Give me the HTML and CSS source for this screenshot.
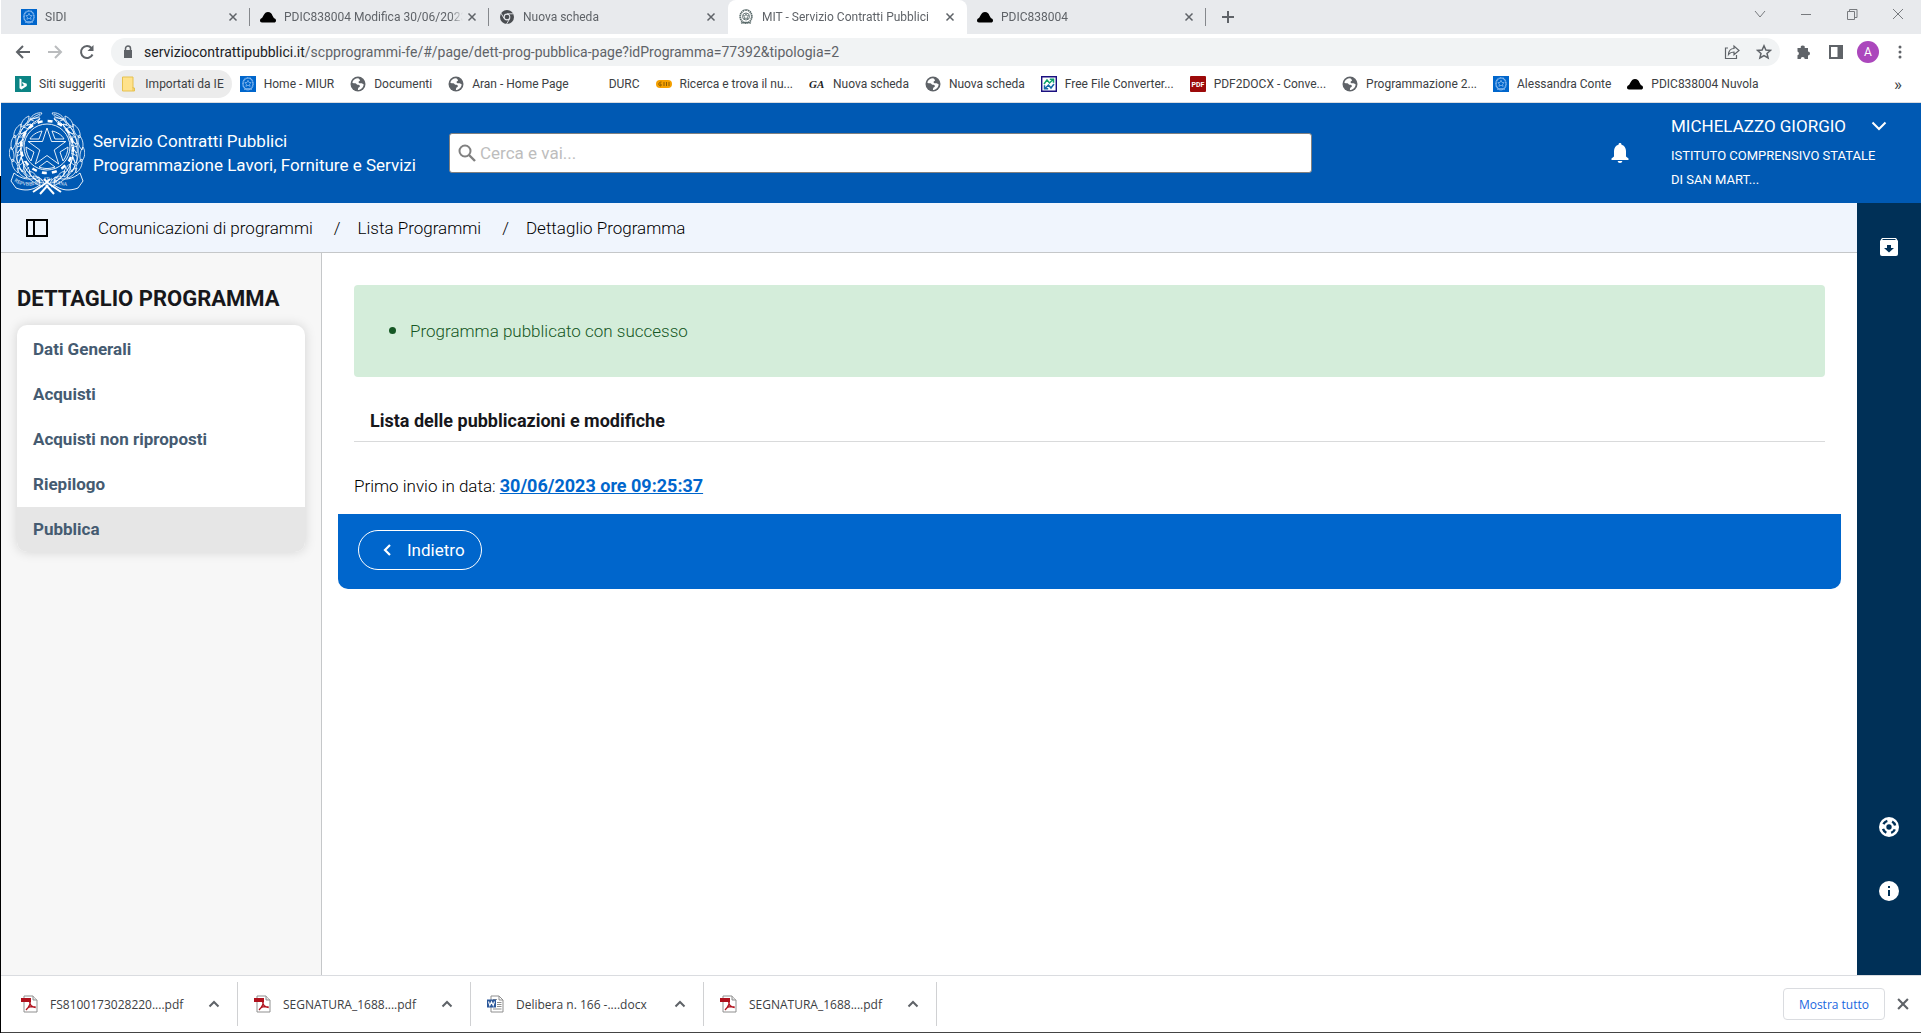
FILE: index.html
```
<!DOCTYPE html>
<html lang="it">
<head>
  <meta charset="utf-8">
  <title>MIT - Servizio Contratti Pubblici</title>
  <link rel="stylesheet" href="styles.css">
</head>
<body>
  <!-- shared icons -->
  <svg class="sprite" aria-hidden="true">
    <symbol id="i-miur" viewBox="0 0 16 16">
      <rect width="16" height="16" fill="#0066cc"/>
      <g fill="none" stroke="#86b9ef">
        <ellipse cx="8" cy="7.800" rx="5" ry="5.900" stroke-width="1.500" stroke-dasharray="1.200 .3"/>
        <path d="M8 4.300l1 2.200 2.200.1-1.700 1.500.6 2.300L8 9.200l-2.100 1.200.6-2.300-1.700-1.500L7 6.500z" stroke-width=".8"/>
        <path d="M4 13.300c2.500-.8 5.500-.8 8 0"/>
      </g>
    </symbol>
    <symbol id="i-rep" viewBox="0 0 16 16">
      <g fill="none" stroke="#5b6b6b">
        <ellipse cx="8" cy="7.500" rx="5.800" ry="6.500" stroke-width="1.800" stroke-dasharray="1.400 .5"/>
        <circle cx="8" cy="7.500" r="3.500" stroke-width=".9"/>
        <path d="M8 4.800l.8 1.900 2 .1-1.500 1.300.5 2L8 9l-1.800 1.100.5-2-1.500-1.300 2-.1z" stroke-width=".8"/>
        <path d="M3 14.200c3-1 7-1 10 0" stroke-width="1.400"/>
      </g>
    </symbol>
    <symbol id="i-cloud" viewBox="0 0 16 16">
      <path d="M2 13.500C.7 13.500 0 12.600 0 11.500c0-1 .6-1.800 1.600-2.200C3.500 8 3.800 3 8 3c2.300 0 3.700 1.500 4.400 3.500l1.600 2.700c1.300.3 2 1.100 2 2.200 0 1.300-.8 2.100-2 2.100z" fill="#000"/>
    </symbol>
    <symbol id="i-chrome" viewBox="0 0 16 16">
      <circle cx="8" cy="8" r="7" fill="#4a4d51"/>
      <circle cx="8" cy="8" r="3.400" fill="#e8eaed"/>
      <circle cx="8" cy="8" r="2.300" fill="#4a4d51"/>
      <path d="M8 4.800h6.500M5.200 9.600L2 4.200M10.800 9.600L7.600 15" stroke="#e8eaed" stroke-width=".9"/>
    </symbol>
    <symbol id="i-x" viewBox="0 0 10 10">
      <path d="M1.500 1.500l7 7M8.500 1.500l-7 7" stroke="currentColor" stroke-width="1.500"/>
    </symbol>
    <symbol id="i-globe" viewBox="0 0 16 16">
      <circle cx="8" cy="8" r="7.500" fill="#5f6368"/>
      <path d="M8.300 2.200C5.500 2 3 3.800 2.300 6.500c.8.8 2 .8 3 .8 1 .1 1.300 1.300 2.300 1.500 1 .3 2.400.2 2.300 1.400-.1 1-1.300.9-1.700 1.900-.2.700-.2 1.300-.3 1.900 3-.1 5.700-2.600 5.700-5.800-.8 0-1.200-.9-2-1-.9 0-1.900.4-2.600-.2-.8-.7-.3-1.800.5-2 .6-.2.6-.7.300-1.200-.4-.6-1.100-.900-1.500-1.600z" fill="#fff"/>
    </symbol>
    <symbol id="i-bing" viewBox="0 0 16 16">
      <rect width="16" height="16" fill="#0c8484"/>
      <path d="M4.500 2.500l2 .7v7.300l2.800-1.600-1.400-.7-.9-2.200 4.800 1.700v2.400l-5.300 3.300-2-1.200z" fill="#fff"/>
    </symbol>
    <symbol id="i-folder" viewBox="0 0 16 16">
      <path d="M1.500 1h10.500v11h1.500v3h-12z" fill="#ffe28c" stroke="#e6c14e"/>
      <path d="M12 11v4" stroke="#e6c14e"/>
    </symbol>
    <symbol id="i-pdf" viewBox="0 0 18 18">
      <path d="M4 1h9l4 4v12H4z" fill="#fff" stroke="#8f8f8f"/>
      <path d="M13 1v4h4" fill="#e4e4e4" stroke="#8f8f8f"/>
      <path d="M1 3h10v4H1z" fill="#b0111d"/>
      <path d="M9.500 7c1.500 0 .5 4-3.500 8M9.700 7c0 3 2 5 6 5.500M7.500 13c2-1.300 5-1.600 8-1" fill="none" stroke="#b0111d" stroke-width="1.300"/>
    </symbol>
    <symbol id="i-word" viewBox="0 0 18 18">
      <path d="M5 1h8l4 4v12H5z" fill="#fff" stroke="#8f8f8f"/>
      <path d="M13 1v4h4M11 7.500h4.500M11 9.500h4.500M11 11.500h4.500M7 14h8.500M7 4.500h4" fill="none" stroke="#8f8f8f"/>
      <path d="M1 4.500h9v8H1z" fill="#2b579a"/>
      <path d="M2.500 6.500l1.300 4 1.700-3.700 1.700 3.700 1.300-4" fill="none" stroke="#fff" stroke-width="1.100"/>
    </symbol>
    <symbol id="i-up" viewBox="0 0 12 12">
      <path d="M1.500 8.500L6 4l4.500 4.500" fill="none" stroke="#5f6368" stroke-width="2"/>
    </symbol>
    <!-- one branch of the wreath, mirrored for the other side -->
    <symbol id="i-branch" viewBox="0 0 76 84">
      <g fill="none" stroke="#fff" stroke-width=".8">
        <path d="M34 76C14 68 5 52 7 36 9 20 18 8 31 3"/>
        <path d="M31 72C16 62 10 48 12 34 14 22 21 12 31 8" stroke-width="1"/>
        <path d="M33 2c-5-1-10 2-12 6 5 0 10-2 12-6zM31 7c-6-1-11 2-13 7 6 0 11-2 13-7z"/>
        <path d="M20 5c-5 2-8 6-8 11 5-2 8-6 8-11zM22 13c-6 1-10 5-11 10 6-1 10-5 11-10z"/>
        <path d="M12 13c-5 3-8 8-7 14 5-3 7-8 7-14zM17 20c-6 3-9 8-9 13 6-2 9-7 9-13z"/>
        <path d="M6 24c-4 4-5 10-3 15 4-4 5-10 3-15zM14 28c-5 4-7 9-6 14 5-4 7-9 6-14z"/>
        <path d="M2 36c-3 5-2 11 2 15 2-5 1-11-2-15zM12 37c-4 5-5 10-3 15 4-4 5-10 3-15z"/>
        <path d="M3 48c-1 6 2 11 6 14 1-6-1-11-6-14zM12 46c-3 6-2 11 1 15 3-4 2-10-1-15z"/>
        <path d="M8 57c1 5 5 9 10 10-1-5-5-9-10-10zM15 53c-1 6 2 11 6 13 1-5-1-10-6-13z"/>
        <path d="M20 60c1 5 5 9 10 10-2-5-5-9-10-10zM24 65c2 4 6 7 11 7-2-4-6-7-11-7z"/>
        <path d="M20 8l5 2M14 16l6 2M9 26l7 0M8 36l6-2M8 45l6-3M11 54l5-4M16 61l4-5"/>
      </g>
    </symbol>
  </svg>

  <div class="window">
    <div class="tab-strip">
      <div class="tab">
        <svg class="icon"><use href="#i-miur"/></svg>
        <span class="tab-title">SIDI</span>
        <button class="tab-close" aria-label="Chiudi"><svg><use href="#i-x"/></svg></button>
      </div>
      <div class="tab">
        <svg class="icon"><use href="#i-cloud"/></svg>
        <span class="tab-title">PDIC838004 Modifica 30/06/2023</span>
        <button class="tab-close" aria-label="Chiudi"><svg><use href="#i-x"/></svg></button>
      </div>
      <div class="tab no-line">
        <svg class="icon"><use href="#i-chrome"/></svg>
        <span class="tab-title">Nuova scheda</span>
        <button class="tab-close" aria-label="Chiudi"><svg><use href="#i-x"/></svg></button>
      </div>
      <div class="tab no-line active">
        <svg class="icon"><use href="#i-rep"/></svg>
        <span class="tab-title">MIT - Servizio Contratti Pubblici</span>
        <button class="tab-close" aria-label="Chiudi"><svg><use href="#i-x"/></svg></button>
      </div>
      <div class="tab">
        <svg class="icon"><use href="#i-cloud"/></svg>
        <span class="tab-title">PDIC838004</span>
        <button class="tab-close" aria-label="Chiudi"><svg><use href="#i-x"/></svg></button>
      </div>
      <button class="new-tab" aria-label="Nuova scheda">
        <svg width="14" height="14" viewBox="0 0 14 14"><path d="M7 1v12M1 7h12" stroke="#5f6368" stroke-width="2"/></svg>
      </button>
      <div class="window-buttons">
        <button aria-label="Cerca schede"><svg viewBox="0 0 12 12"><path d="M1 3l5 6 5-6"/></svg></button>
        <button aria-label="Riduci"><svg viewBox="0 0 12 12"><path d="M1 6.500h10"/></svg></button>
        <button aria-label="Ripristina"><svg viewBox="0 0 12 12"><path d="M1.500 3.500h7v8h-7zM3.500 3.500v-2h7.500v8H8.500"/></svg></button>
        <button aria-label="Chiudi finestra"><svg viewBox="0 0 12 12"><path d="M1 1l10 10M11 1L1 11"/></svg></button>
      </div>
    </div>

    <div class="toolbar">
      <button class="tool" aria-label="Indietro"><svg viewBox="0 0 16 16"><path d="M15 8H2M8 2L2 8l6 6" fill="none" stroke="#5f6368" stroke-width="2"/></svg></button>
      <button class="tool" aria-label="Avanti"><svg viewBox="0 0 16 16"><path d="M1 8h13M8 2l6 6-6 6" fill="none" stroke="#babcbe" stroke-width="2"/></svg></button>
      <button class="tool" aria-label="Ricarica"><svg viewBox="0 0 16 16"><path d="M13.500 10.500A6 6 0 1 1 12.500 4" fill="none" stroke="#5f6368" stroke-width="2"/><path d="M14.500 1v6h-6z" fill="#5f6368"/></svg></button>
      <div class="omnibox">
        <svg class="lock" viewBox="0 0 10 14"><path d="M1 5h8v8H1z" fill="#5f6368"/><path d="M2.500 5V3.500a2.500 2.500 0 0 1 5 0V5" fill="none" stroke="#5f6368" stroke-width="1.500"/></svg>
        <div class="url"><b>serviziocontrattipubblici.it</b>/scpprogrammi-fe/#/page/dett-prog-pubblica-page?idProgramma=77392&amp;tipologia=2</div>
        <button class="tool" aria-label="Condividi"><svg viewBox="0 0 16 16"><path d="M4 4H1.500v10.500h11V11M4.500 10.500c.3-4 2.500-6 5.500-6V2l5 4.500-5 4.200V8c-2.500 0-4 .6-5.500 2.500z" fill="none" stroke="#5f6368" stroke-width="1.200"/></svg></button>
        <button class="tool" aria-label="Preferiti"><svg viewBox="0 0 16 16"><path d="M8 1.800l1.900 4.200 4.600.4-3.500 3 1.100 4.500L8 11.500l-4.100 2.400L5 9.400l-3.500-3 4.600-.4z" fill="none" stroke="#5f6368" stroke-width="1.500"/></svg></button>
      </div>
      <button class="tool" aria-label="Estensioni"><svg viewBox="0 0 16 16"><path d="M1.500 4h3.300a2 2 0 1 1 3.900 0H12v3.500a2 2 0 1 1 0 4V15H8.700a2 2 0 0 0-4 0H1.500v-3.700a2 2 0 0 0 0-3.800z" fill="#5f6368"/></svg></button>
      <button class="tool" aria-label="Pannello laterale"><svg viewBox="0 0 16 16"><path d="M2 2h12v12H2z" fill="none" stroke="#5f6368" stroke-width="2"/><path d="M9.500 2H14v12H9.500z" fill="#5f6368"/></svg></button>
      <button class="avatar">A</button>
      <button class="tool" aria-label="Menu"><svg viewBox="0 0 16 16"><g fill="#5f6368"><circle cx="8" cy="3" r="1.500"/><circle cx="8" cy="8" r="1.500"/><circle cx="8" cy="13" r="1.500"/></g></svg></button>
    </div>

    <nav class="bookmarks">
      <a href="#"><svg class="icon"><use href="#i-bing"/></svg>Siti suggeriti</a>
      <a href="#" class="hovered"><svg class="icon"><use href="#i-folder"/></svg>Importati da IE</a>
      <a href="#"><svg class="icon"><use href="#i-miur"/></svg>Home - MIUR</a>
      <a href="#"><svg class="icon"><use href="#i-globe"/></svg>Documenti</a>
      <a href="#"><svg class="icon"><use href="#i-globe"/></svg>Aran - Home Page</a>
      <a href="#"><svg class="icon"></svg>DURC</a>
      <a href="#"><svg class="icon" viewBox="0 0 16 16"><path d="M4 4h8a4 4 0 0 1 0 8H4a4 4 0 0 1 0-8z" fill="#f5a000"/><path d="M5.500 6C2 6 2 10 5 10V8H3.800M8 6v4M10.500 6v4M13 6v4" fill="none" stroke="#8a5a00"/></svg>Ricerca e trova il nu...</a>
      <a href="#"><svg class="icon" viewBox="0 0 16 16"><text class="ga" x="0" y="12">GA</text></svg>Nuova scheda</a>
      <a href="#"><svg class="icon"><use href="#i-globe"/></svg>Nuova scheda</a>
      <a href="#"><svg class="icon" viewBox="0 0 16 16"><path d="M.7.7h14.600v14.600H.7z" fill="#fff" stroke="#1a1080" stroke-width="1.400"/><path d="M3 8l3-4 2.500 3L12 3.500M8.800 3.200h3.700v3.600" fill="none" stroke="#10a36c" stroke-width="1.500"/><path d="M13 8l-3 4-2.500-3L4 12.500M7.200 12.800H3.500V9.200" fill="none" stroke="#1468a8" stroke-width="1.500"/></svg>Free File Converter...</a>
      <a href="#"><svg class="icon" viewBox="0 0 16 16"><rect width="16" height="16" rx="1" fill="#9c0a0a"/><text class="pdf-logo" x="8" y="11">PDF</text></svg>PDF2DOCX - Conve...</a>
      <a href="#"><svg class="icon"><use href="#i-globe"/></svg>Programmazione 2...</a>
      <a href="#"><svg class="icon"><use href="#i-miur"/></svg>Alessandra Conte</a>
      <a href="#"><svg class="icon"><use href="#i-cloud"/></svg>PDIC838004 Nuvola</a>
      <button class="more" aria-label="Altri preferiti">»</button>
    </nav>

    <header class="header">
      <svg class="emblem" viewBox="0 0 76 84">
        <use href="#i-branch"/>
        <use href="#i-branch" transform="translate(76 0) scale(-1 1)"/>
        <g fill="none" stroke="#fff" stroke-width=".9">
          <circle cx="38" cy="36" r="23"/>
          <circle cx="38" cy="36" r="26" stroke-width="2.500" stroke-dasharray="5 5.200"/>
          <path d="M38 17l4.500 13.500h14.300L45.200 39l4.500 14L38 44.500 26.300 53l4.500-14-11.600-8.500h14.300z"/>
          <path d="M33 20c-5 1-10 4-12 8h9zM43 20c5 1 10 4 12 8h-9zM17 36l8 5-3 9c-3-4-5-9-5-14zM59 36l-8 5 3 9c3-4 5-9 5-14zM30 56l8-6 8 6c-5 2-11 2-16 0z"/>
          <path d="M5 62L2 70l5 7c8 3 16 3 24-3l-1-8c-9 4-18 2-25-4zM71 62l3 8-5 7c-8 3-16 3-24-3l1-8c9 4 18 2 25-4z"/>
        </g>
        <path d="M24 81l13-9 4-4M52 81l-13-9-4-4M31 83l8-9M45 83l-8-9" fill="none" stroke="#fff" stroke-width="2"/>
        <path id="ribbon" d="M5 70c8 6 18 6 27 1 4-2 8-2 12 0 9 5 19 5 27-1" fill="none"/>
        <text class="motto"><textPath href="#ribbon">REPVBBLICA ITALIANA</textPath></text>
      </svg>
      <div class="brand">Servizio Contratti Pubblici<br>Programmazione Lavori, Forniture e Servizi</div>
      <label class="search">
        <svg width="18" height="18" viewBox="0 0 18 18"><circle cx="7" cy="7" r="5.500" fill="none" stroke="#808080" stroke-width="2"/><path d="M11 11l6 6" stroke="#808080" stroke-width="2.400"/></svg>
        <input type="text" placeholder="Cerca e vai..." aria-label="Cerca e vai">
      </label>
      <button class="bell" aria-label="Notifiche"><svg width="18" height="20" viewBox="0 0 18 20"><path d="M9 0c1 0 1.500.7 1.500 1.700C13.300 2.400 15 5 15 8v5.500l2.500 2V17H.5v-1.500l2.500-2V8c0-3 1.700-5.600 4.500-6.300C7.500.7 8 0 9 0zM6.700 18h4.600c0 1.200-1 2-2.300 2s-2.300-.8-2.300-2z" fill="#fff"/></svg></button>
      <div class="user">
        <button class="user-name">MICHELAZZO GIORGIO
          <svg width="16" height="10" viewBox="0 0 16 10"><path d="M1.500 1.500L8 8l6.500-6.500" fill="none" stroke="#fff" stroke-width="2"/></svg>
        </button>
        <div class="user-office">ISTITUTO COMPRENSIVO STATALE DI SAN MART...</div>
      </div>
    </header>

    <div class="page">
      <div class="page-body">
        <nav class="breadcrumb">
          <button class="toggle" aria-label="Menu laterale"><svg width="22" height="18" viewBox="0 0 22 18"><path d="M1 1h20v16H1zM8 1v16" fill="none" stroke="#000" stroke-width="2"/></svg></button>
          <a href="#">Comunicazioni di programmi</a>
          <span class="sep">/</span>
          <a href="#">Lista Programmi</a>
          <span class="sep">/</span>
          <a href="#">Dettaglio Programma</a>
        </nav>
        <div class="columns">
          <aside class="sidebar">
            <h1>DETTAGLIO PROGRAMMA</h1>
            <nav class="menu">
              <a href="#">Dati Generali</a>
              <a href="#">Acquisti</a>
              <a href="#">Acquisti non riproposti</a>
              <a href="#">Riepilogo</a>
              <a href="#" class="selected">Pubblica</a>
            </nav>
          </aside>
          <main class="content">
            <ul class="alert">
              <li>Programma pubblicato con successo</li>
            </ul>
            <h2>Lista delle pubblicazioni e modifiche</h2>
            <p class="sent">Primo invio in data: <a href="#">30/06/2023 ore 09:25:37</a></p>
            <div class="actions">
              <button class="back"><svg width="8" height="12" viewBox="0 0 8 12"><path d="M7 1L2 6l5 5" fill="none" stroke="#fff" stroke-width="2.200"/></svg>Indietro</button>
            </div>
          </main>
        </div>
      </div>
      <aside class="rail">
        <button aria-label="Archivio"><svg viewBox="0 0 20 20"><path d="M3 1h14l2 3v13a2 2 0 0 1-2 2H3a2 2 0 0 1-2-2V4z" fill="#fff"/><path d="M3.500 2.500h13" stroke="#003057"/><path d="M8 8h4v3h3l-5 4.500L5 11h3z" fill="#003057"/></svg></button>
        <button class="rail-help" aria-label="Assistenza"><svg viewBox="0 0 20 20"><circle cx="10" cy="10" r="10" fill="#fff"/><circle cx="10" cy="10" r="2.700" fill="#003057"/><circle cx="10" cy="10" r="6.300" fill="none" stroke="#003057" stroke-width="2.400" stroke-dasharray="4.900 5" stroke-dashoffset="-2.500"/></svg></button>
        <button aria-label="Informazioni"><svg viewBox="0 0 20 20"><circle cx="10" cy="10" r="10" fill="#fff"/><path d="M10 5v2M10 9v6" stroke="#003057" stroke-width="2"/></svg></button>
      </aside>
    </div>

    <footer class="downloads">
      <button class="download"><svg class="file"><use href="#i-pdf"/></svg><span>FS8100173028220....pdf</span><svg class="up"><use href="#i-up"/></svg></button>
      <button class="download"><svg class="file"><use href="#i-pdf"/></svg><span>SEGNATURA_1688....pdf</span><svg class="up"><use href="#i-up"/></svg></button>
      <button class="download"><svg class="file"><use href="#i-word"/></svg><span>Delibera n. 166 -....docx</span><svg class="up"><use href="#i-up"/></svg></button>
      <button class="download"><svg class="file"><use href="#i-pdf"/></svg><span>SEGNATURA_1688....pdf</span><svg class="up"><use href="#i-up"/></svg></button>
      <button class="show-all">Mostra tutto</button>
      <button class="shelf-close" aria-label="Chiudi"><svg width="14" height="14"><use href="#i-x"/></svg></button>
    </footer>
  </div>
</body>
</html>
```
FILE: styles.css
```
:root {
    --header: #0059b3;
    --primary: #0066cc;
    --dark: #003057;
    --line: #c5c7c9;
    --grey: #5f6368;
}

* {
    box-sizing: border-box;
}

body {
    margin: 0;
    background: linear-gradient(#fff 176px, #000 176px);
    font-family: "Roboto", sans-serif;
    font-size: 17px;
    color: #17171b;
}

button {
    border: none;
    background: none;
    padding: 0;
    font: inherit;
    color: inherit;
    cursor: pointer;
}

a {
    color: inherit;
    text-decoration: none;
}

svg {
    display: block;
    flex: none;
}

.sprite {
    position: absolute;
    width: 0;
    height: 0;
}

.window {
    display: flex;
    flex-direction: column;
    min-height: 100vh;
    margin-left: 1px;
    background: #fff;
    border-bottom: 1px solid #444;
}

.icon {
    width: 16px;
    height: 16px;
}

/* tabs */
.tab-strip {
    display: flex;
    height: 34px;
    padding-left: 10px;
    background: #e8eaed;
    font-size: 12px;
    color: var(--grey);
}

.tab {
    display: flex;
    align-items: center;
    gap: 8px;
    width: 239px;
    padding: 0 12px 0 10px;
    background: linear-gradient(#85888c, #85888c) right center / 1px 18px no-repeat;
}

.tab.no-line {
    background: none;
}

.tab.active {
    background: #fff;
    border-radius: 8px 8px 0 0;
}

.tab-title {
    flex: 1;
    margin-right: -4px;
    overflow: hidden;
    white-space: nowrap;
    mask-image: linear-gradient(to left, transparent, #000 12px);
}

.tab-close svg {
    width: 10px;
    height: 10px;
}

.new-tab {
    padding: 0 15px;
}

.window-buttons {
    display: flex;
    gap: 34px;
    margin: -6px 17px 0 auto;
}

.window-buttons svg {
    width: 12px;
    height: 12px;
    fill: none;
    stroke: #777a7e;
}

/* address bar */
.toolbar {
    display: flex;
    align-items: center;
    gap: 16px;
    height: 36px;
    padding: 0 13px 0 14px;
}

.tool svg {
    width: 16px;
    height: 16px;
}

.omnibox {
    display: flex;
    align-items: center;
    flex: 1;
    gap: 16px;
    height: 28px;
    padding: 0 8px 0 12px;
    border-radius: 14px;
    background: #f1f3f4;
}

.lock {
    width: 10px;
    height: 14px;
    margin-right: -5px;
}

.url {
    flex: 1;
    font-size: 14px;
    color: var(--grey);
}

.url b {
    font-weight: 400;
    color: #202124;
}

.avatar {
    width: 22px;
    height: 22px;
    margin: 0 -3px;
    border-radius: 50%;
    background: #ab47bc;
    color: #fff;
    font-size: 12px;
}

.bookmarks {
    display: flex;
    align-items: center;
    gap: 16px;
    height: 33px;
    padding: 0 19px 4px 14px;
    border-bottom: 1px solid #dadce0;
    font-size: 12px;
    color: #3c4043;
    white-space: nowrap;
}

.bookmarks a {
    display: flex;
    align-items: center;
    gap: 8px;
}

.bookmarks .hovered {
    height: 28px;
    margin: 0 -8px;
    padding: 0 8px;
    border-radius: 14px;
    background: #ececec;
}

.more {
    margin-left: auto;
    font-size: 17px;
}

.ga {
    font: italic bold 11px "Liberation Serif", serif;
    fill: #222;
}

.pdf-logo {
    font-size: 7px;
    font-weight: 700;
    fill: #fff;
    text-anchor: middle;
}

/* site header */
.header {
    display: flex;
    align-items: center;
    height: 100px;
    padding: 0 34px 0 8px;
    background: var(--header);
    color: #fff;
}

.emblem {
    width: 76px;
    height: 84px;
}

.motto {
    font: 5px "Liberation Serif", serif;
    fill: #fff;
}

.brand {
    width: 364px;
    padding-left: 8px;
    line-height: 24px;
    white-space: nowrap;
}

.search {
    display: flex;
    align-items: center;
    gap: 4px;
    flex: 1;
    height: 40px;
    margin-right: 299px;
    padding: 0 8px;
    border: 1px solid #808080;
    border-radius: 3px;
    background: #fff;
}

.search input {
    flex: 1;
    border: none;
    outline: none;
    padding: 0;
    font: inherit;
}

.search input::placeholder {
    color: #bdbdbd;
}

.user {
    width: 216px;
    margin-left: 42px;
    padding-bottom: 6px;
}

.user-name {
    display: flex;
    align-items: center;
    justify-content: space-between;
    width: 100%;
    line-height: 36px;
}

.user-office {
    font-size: 13px;
    line-height: 24px;
}

/* page */
.page {
    display: flex;
    flex: 1;
}

.page-body {
    display: flex;
    flex-direction: column;
    flex: 1;
}

.breadcrumb {
    display: flex;
    align-items: center;
    gap: 17px;
    height: 50px;
    padding-left: 25px;
    border-bottom: 1px solid var(--line);
    background: #f0f5fd;
    color: #000;
    font-weight: 300;
}

.toggle {
    margin-right: 33px;
}

.sep {
    margin-left: 4px;
}

.columns {
    display: flex;
    flex: 1;
}

.sidebar {
    width: 321px;
    padding: 28px 16px;
    border-right: 1px solid var(--line);
    background: #f7f7f7;
}

h1 {
    margin: 0 0 8px;
    font-size: 22px;
    font-weight: 700;
    line-height: 36px;
    white-space: nowrap;
}

.menu {
    overflow: hidden;
    padding-top: 2px;
    border-radius: 10px;
    background: #fff;
    box-shadow: 0 0 12px rgba(0, 0, 0, 0.15);
}

.menu a {
    display: block;
    padding-left: 16px;
    line-height: 45px;
    font-weight: 700;
    color: #455b71;
}

.menu .selected {
    background: #e6e6e6;
}

.content {
    flex: 1;
    padding: 32px 16px;
}

.alert {
    margin: 0 16px;
    padding: 32px 56px 34px;
    border-radius: 4px;
    background: #d4edda;
    color: #155724;
    font-weight: 300;
    line-height: 24px;
}

.alert li::marker {
    font-size: 24px;
}

h2 {
    margin: 28px 16px 32px;
    padding: 0 16px 4px;
    border-bottom: 1px solid #d9dadb;
    font-size: 18px;
    font-weight: 700;
    line-height: 32px;
}

.sent {
    margin: 0 16px 16px;
    color: #000;
    font-weight: 300;
    line-height: 24px;
}

.sent a {
    color: var(--primary);
    font-size: 18px;
    font-weight: 700;
    text-decoration: underline;
}

.actions {
    padding: 16px 20px 19px;
    border-radius: 0 0 10px 10px;
    background: var(--primary);
}

.back {
    display: flex;
    align-items: center;
    gap: 16px;
    height: 40px;
    padding: 0 16px 0 24px;
    border: 1px solid #fff;
    border-radius: 20px;
    color: #fff;
}

.rail {
    display: flex;
    flex-direction: column;
    align-items: center;
    gap: 44px;
    width: 64px;
    padding: 34px 0 74px;
    background: var(--dark);
}

.rail svg {
    width: 20px;
    height: 20px;
}

.rail-help {
    margin-top: auto;
}

/* downloads */
.downloads {
    display: flex;
    align-items: center;
    height: 57px;
    padding: 0 11px 0 4px;
    border-top: 1px solid #dadce0;
    background: #fff;
    font-family: "Open Sans", sans-serif;
    font-size: 12px;
    color: #3c4043;
}

.download {
    display: flex;
    align-items: center;
    width: 233px;
    height: 44px;
    padding: 0 17px 0 15px;
    border-right: 1px solid #d0d1d3;
}

.download span {
    flex: 1;
    margin-left: 12px;
    text-align: left;
}

.file {
    width: 18px;
    height: 18px;
}

.up {
    width: 12px;
    height: 12px;
}

.show-all {
    height: 32px;
    margin: 0 11px 0 auto;
    padding: 0 15px;
    border: 1px solid #dadce0;
    border-radius: 4px;
    color: #1a67e0;
}

.shelf-close {
    color: var(--grey);
}
```
